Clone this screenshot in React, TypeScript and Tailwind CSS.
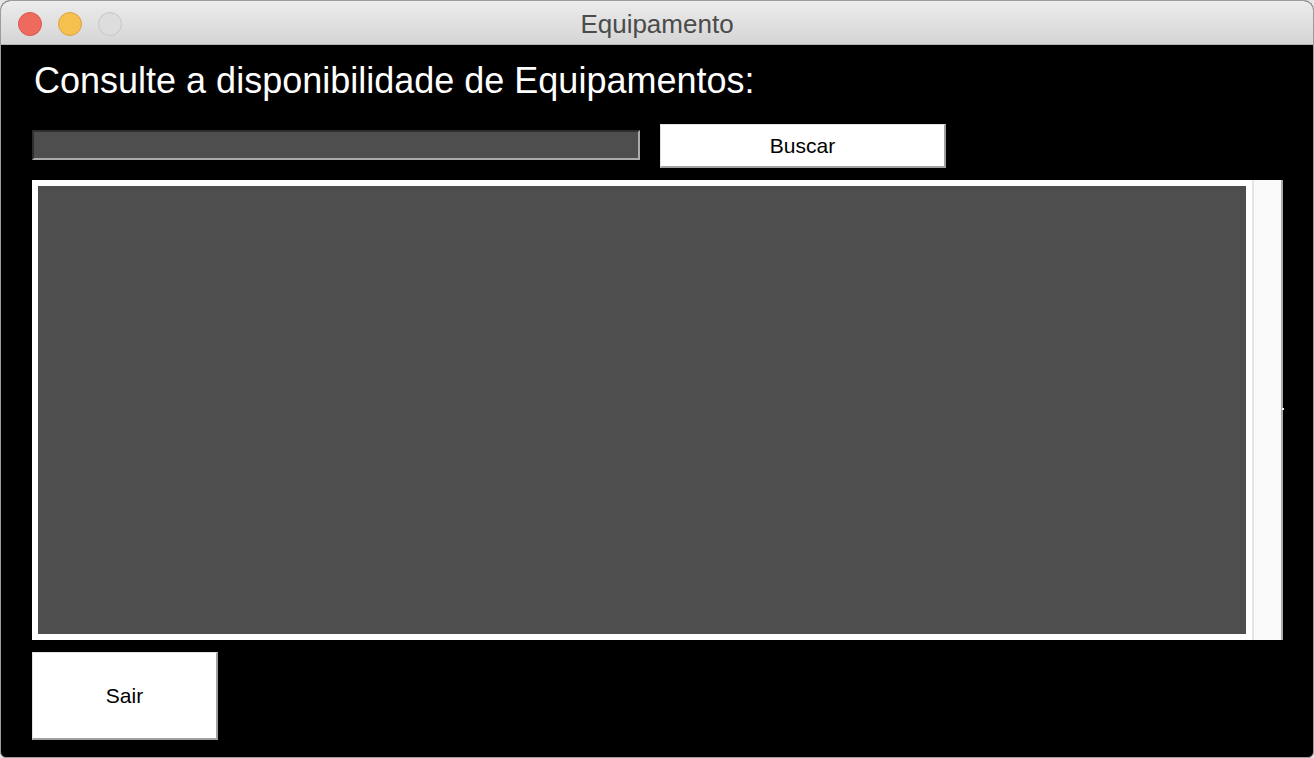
import React from 'react';

const TrafficLights: React.FC = () => (
  <div className="absolute left-[17px] top-[11px] flex gap-[16px]">
    <span className="w-[24px] h-[24px] rounded-full bg-[#ee6a5f] border border-[#d9574c]"></span>
    <span className="w-[24px] h-[24px] rounded-full bg-[#f6c04f] border border-[#daa443]"></span>
    <span className="w-[24px] h-[24px] rounded-full bg-[#dddddd] border border-[#c6c6c6]"></span>
  </div>
);

const App: React.FC = () => {
  return (
    <div className="w-[1314px] h-[758px] bg-[#e6e6e6] font-['Liberation_Sans',Arial,sans-serif]">
      <div className="w-full h-full flex flex-col overflow-hidden rounded-t-[10px] rounded-b-[6px] border border-[#9c9c9c] bg-black">
        {/* title bar */}
        <div className="relative h-[44px] shrink-0 flex items-center justify-center bg-gradient-to-b from-[#ececec] to-[#d5d5d5] border-b border-[#b3b3b3]">
          <TrafficLights />
          <span className="text-[26px] leading-none text-[#4b4b4b] pt-[3px]">Equipamento</span>
        </div>

        {/* content */}
        <div className="flex-1 flex flex-col px-[31px] pt-[18px]">
          <h1 className="ml-[2px] text-[36px] leading-[36px] text-white">
            Consulte a disponibilidade de Equipamentos:
          </h1>

          <div className="mt-[25px] flex items-start gap-[20px] h-[44px]">
            <div className="mt-[6px] w-[608px] h-[30px] bg-[#4e4e4e] border-t-2 border-l-2 border-[#2e2e2e] border-b-2 border-r-2 border-b-[#ababab] border-r-[#ababab]"></div>
            <button className="w-[286px] h-[44px] bg-white border-t border-l border-[#e2e2e2] border-b-2 border-r-2 border-b-[#a0a0a0] border-r-[#a0a0a0] text-[21px] text-black">
              Buscar
            </button>
          </div>

          <div className="relative mt-[12px] w-[1251px] h-[460px] flex">
            <div className="w-[1220px] h-full bg-white p-[6px]">
              <div className="w-full h-full bg-[#4e4e4e]"></div>
            </div>
            <div className="flex-1 h-full bg-[#fafafa] border-l-2 border-[#e6e6e6] border-r-2 border-r-[#a9a9a9]"></div>
            <span className="absolute right-[-1px] top-[228px] w-[2px] h-[2px] bg-white"></span>
          </div>

          <button className="mt-[12px] w-[186px] h-[88px] bg-white border-t border-l border-[#e2e2e2] border-b-2 border-r-2 border-b-[#a0a0a0] border-r-[#a0a0a0] text-[21px] text-black">
            Sair
          </button>
        </div>
      </div>
    </div>
  );
};

export default App;
